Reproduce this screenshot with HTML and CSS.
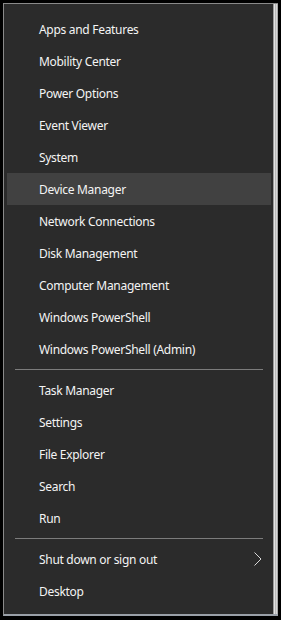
FILE: index.html
```html
<!DOCTYPE html>
<html lang="en">
<head>
<meta charset="UTF-8">
<meta name="viewport" content="width=device-width, initial-scale=1.0">
<title>Quick Link Menu</title>
<link rel="stylesheet" href="styles.css">
</head>
<body>
<div class="frame">
    <div class="menu">
        <ul class="menu-list">
            <li class="menu-item">Apps and Features</li>
            <li class="menu-item">Mobility Center</li>
            <li class="menu-item">Power Options</li>
            <li class="menu-item">Event Viewer</li>
            <li class="menu-item">System</li>
            <li class="menu-item active">Device Manager</li>
            <li class="menu-item">Network Connections</li>
            <li class="menu-item">Disk Management</li>
            <li class="menu-item">Computer Management</li>
            <li class="menu-item">Windows PowerShell</li>
            <li class="menu-item">Windows PowerShell (Admin)</li>
            <li class="separator"></li>
            <li class="menu-item">Task Manager</li>
            <li class="menu-item">Settings</li>
            <li class="menu-item">File Explorer</li>
            <li class="menu-item">Search</li>
            <li class="menu-item">Run</li>
            <li class="separator"></li>
            <li class="menu-item has-sub">
                <span>Shut down or sign out</span>
                <svg class="chevron" width="8" height="14" viewBox="0 0 8 14">
                    <polyline points="0.5,0.5 7,7 0.5,13.5" fill="none" stroke="#d8d8d8" stroke-width="1"/>
                </svg>
            </li>
            <li class="menu-item">Desktop</li>
        </ul>
        <div class="edge"></div>
    </div>
</div>
</body>
</html>
```

FILE: styles.css
```css
html, body {
    margin: 0;
    padding: 0;
    background-color: #000;
    height: 620px;
    overflow: hidden;
}
.frame {
    padding: 3px 3px 0 3px;
}
.menu {
    display: flex;
    background-color: #2b2b2b;
    border-top: 1px solid #8a8a8a;
    border-left: 1px solid #8a8a8a;
    border-bottom: 2px solid #9aa0a8;
    height: 610px;
}
.menu-list {
    flex: 1;
    list-style: none;
    margin: 0;
    padding: 9px 2px 7px 3px;
    font-family: "Noto Sans", "Open Sans", sans-serif;
    font-size: 12px;
    letter-spacing: -0.3px;
    color: #f4f4f4;
}
.menu-item {
    height: 32px;
    line-height: 34px;
    padding-left: 32px;
    white-space: nowrap;
}
.menu-item.active {
    background-color: #414141;
}
.has-sub {
    display: flex;
    align-items: flex-start;
    justify-content: space-between;
    padding-right: 9px;
}
.chevron {
    display: block;
    margin-top: 9px;
}
.separator {
    height: 1px;
    margin: 4px 8px;
    background-color: #7c7c7c;
}
.edge {
    width: 5px;
    background: linear-gradient(to right, #9a9a9a 0, #9a9a9a 1px, #e2e2e2 1px, #e2e2e2 2px, #b8b8b8 2px, #b8b8b8 3px, #d6d6d6 3px, #d6d6d6 4px, #a8a8a8 4px);
}
```
